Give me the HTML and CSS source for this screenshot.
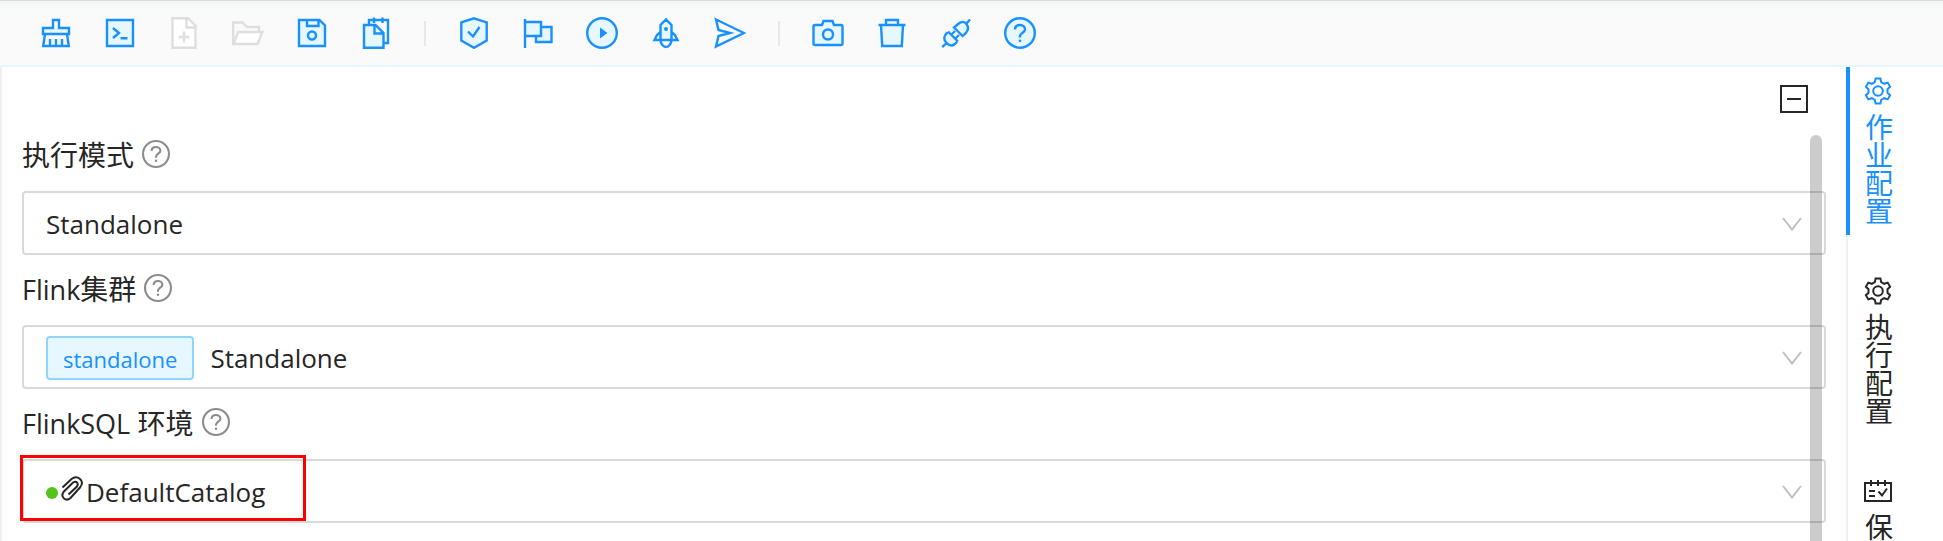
FILE: index.html
```html
<!DOCTYPE html>
<html lang="zh-CN">
<head>
<meta charset="utf-8">
<title>作业配置</title>
<link rel="stylesheet" href="styles.css">
</head>
<body>
<svg class="defs" aria-hidden="true">
  <symbol id="question" viewBox="0 0 32 32">
    <circle cx="16" cy="16" r="14.8"/>
    <path d="M11 12.6C11 9.6 13.2 8 16 8S21 9.8 21 12.4C21 15.6 16 15.8 16 19.2V20.4"/>
    <circle class="dot" cx="16" cy="23.8" r="1.4"/>
  </symbol>
  <symbol id="chevron" viewBox="0 0 20 14">
    <path d="M1 1L10 12.5L19 1"/>
  </symbol>
  <symbol id="gear" viewBox="0 0 28 28">
    <path d="M11.6 1.5h4.8l.8 3.6 3 1.7 3.5-1.2 2.4 4.2-2.6 2.5v3.4l2.6 2.5-2.4 4.2-3.5-1.2-3 1.7-.8 3.6h-4.8l-.8-3.6-3-1.7-3.5 1.2-2.4-4.2 2.6-2.5v-3.4L1.9 9.8l2.4-4.2 3.5 1.2 3-1.7z"/>
    <circle cx="14" cy="14" r="4.8"/>
  </symbol>
</svg>

<div class="toolbar" role="toolbar" aria-label="工具栏">
  <button class="tool" type="button" aria-label="清理"><svg viewBox="0 0 32 32"><path class="tint" d="M3 11h26v6H3z"/><path d="M13 11V3h6v8h10v6H3v-6zM5 17L3.2 29h25.6L27 17M10 29v-7M16 29v-7M22 29v-7"/></svg></button>
  <button class="tool" type="button" aria-label="控制台"><svg viewBox="0 0 32 32"><path class="tint" d="M3 3h26v26H3z"/><path d="M3 3h26v26H3zM9 11l6 5-6 5M16.5 21.2h7"/></svg></button>
  <button class="tool" type="button" aria-label="新建" disabled><svg viewBox="0 0 32 32"><path class="paper" d="M4 1h16l8 8v22H4z"/><path d="M4.500 1.200h15.500l7.500 7.500v22.100H4.500zM18.500 1v9.500H28M16 14.500v11M10.500 20h11"/></svg></button>
  <button class="tool" type="button" aria-label="打开" disabled><svg viewBox="0 0 32 32"><path class="paper" d="M6 15h24l-4.5 12H1.5z"/><path d="M27 15v-5H15l-4.500-4.500H1.200V27h24.300L30.500 15H6L1.500 27"/></svg></button>
  <button class="tool" type="button" aria-label="保存"><svg viewBox="0 0 32 32"><path class="tint" d="M3 3h20.5l5.5 5.5V29H3z"/><path d="M3 3h20.5l5.5 5.5V29H3zM11 3v6h11.5V3"/><circle cx="16" cy="18.5" r="4"/></svg></button>
  <button class="tool" type="button" aria-label="复制"><svg viewBox="0 0 32 32"><path class="tint" d="M4 8h13.5l6 6.5V31H4z"/><path d="M4 8h11.5l8 8v14.800H4zM14.500 8v8.500h9M9 7V3h19v23h-4M14 .5v5.500M22.500 .5v5.500"/></svg></button>
  <span class="divider"></span>
  <button class="tool" type="button" aria-label="校验"><svg viewBox="0 0 32 32"><path class="tint" d="M16 1l13 4v18.5L16 31 3 23.500V5z"/><path d="M16 1.300l12.700 4V23.500L16 30.800 3.300 23.500V5.300zM10 14.500l5 5L21.500 10"/></svg></button>
  <button class="tool" type="button" aria-label="计划"><svg viewBox="0 0 32 32"><path class="tint" d="M19 10h11v15H14v-6h5zM3 5h16v14H3z"/><path d="M3 2v29M3 5h16v14H3M19 10h10.500v15H14v-6"/></svg></button>
  <button class="tool" type="button" aria-label="运行"><svg viewBox="0 0 32 32"><circle class="tint" cx="16" cy="16" r="15"/><circle cx="16" cy="16" r="14.8"/><path class="solid" d="M14 10.500v11l7.500-5.500z"/></svg></button>
  <button class="tool" type="button" aria-label="发布"><svg viewBox="0 0 32 32"><path class="tint" d="M10.500 23V8L16 2.500 21.500 8v15z"/><path d="M10.500 23V8L16 2.500 21.500 8v15zM10.500 15L7 18l-2.500 5h6M21.500 15l3.500 3 2.500 5h-6M10.500 23c0 4 3 7 5.500 7s5.500-3 5.500-7"/><circle class="solid" cx="16" cy="12" r="2"/></svg></button>
  <button class="tool" type="button" aria-label="提交"><svg viewBox="0 0 32 32"><path d="M2 2.500L30 16 2 29.500 4.500 19 16 16 4.500 13z"/></svg></button>
  <span class="divider"></span>
  <button class="tool" type="button" aria-label="快照"><svg viewBox="0 0 32 32"><path class="tint" d="M2 8h7l2-4h10l2 4h7v20H2z"/><path d="M10 8l1.500-4h9L22 8h7q1.500 0 1.500 1.500V26.500q0 1.500-1.500 1.500H3q-1.500 0-1.500-1.500V9.500Q1.500 8 3 8z"/><circle cx="16" cy="17.500" r="5"/></svg></button>
  <button class="tool" type="button" aria-label="删除"><svg viewBox="0 0 32 32"><path class="tint" d="M5 8h22l-1 21H6z"/><path d="M2.500 8h27M10 8V3h12v5M5 8l1.200 21h19.600L27 8"/></svg></button>
  <button class="tool" type="button" aria-label="连接"><svg viewBox="0 0 32 32"><path class="tint" d="M7.500 15.500L17.500 25.500Q12 31 7 26.500T7.500 15.500zM13.500 11L20 5.500Q25 4 27 8.500T22.500 19.500z"/><path d="M8 14.500L18 24.500M7.500 15.500Q1.500 20.500 6.500 26T17 25M6.500 26L2.200 30.200M11.500 17.500l3.500-3.500M15.500 21.500l3.500-3.500M14 10.500L22.500 19l3-2.500Q30 11.500 26.500 7T17.500 7.500zM26.500 6.500L30 2.500"/></svg></button>
  <button class="tool" type="button" aria-label="帮助"><svg viewBox="0 0 32 32"><circle class="tint" cx="16" cy="16" r="15"/><use href="#question"/></svg></button>
</div>

<div class="workspace">
  <main class="panel">
    <div class="panel-head">
      <button class="collapse" type="button" aria-label="收起"><svg viewBox="0 0 28 28"><path d="M1 1h26v26H1zM7 14h14"/></svg></button>
    </div>
    <form class="form">
      <div class="field">
        <div class="label"><label for="mode">执行模式</label><svg class="hint"><use href="#question"/></svg></div>
        <div class="control">
          <select id="mode"><option>Standalone</option></select>
          <svg class="arrow"><use href="#chevron"/></svg>
        </div>
      </div>
      <div class="field">
        <div class="label"><label for="cluster"><span class="latin">Flink</span>集群</label><svg class="hint"><use href="#question"/></svg></div>
        <div class="control">
          <span class="tag">standalone</span>
          <select id="cluster"><option>Standalone</option></select>
          <svg class="arrow"><use href="#chevron"/></svg>
        </div>
      </div>
      <div class="field">
        <div class="label"><label for="env"><span class="latin">FlinkSQL</span> 环境</label><svg class="hint"><use href="#question"/></svg></div>
        <div class="control">
          <span class="status"></span>
          <svg class="clip" viewBox="0 0 24 26"><path d="M2.500 11.500L11.500 3q4.500-3.500 8.500 0t0 8.500L10.500 22q-3.500 3-6.500.500t-.500-6.500L13 6.500q2.500-1.500 4 0t0 4L8.500 18.500"/></svg>
          <select id="env"><option>DefaultCatalog</option></select>
          <svg class="arrow"><use href="#chevron"/></svg>
          <span class="highlight"></span>
        </div>
      </div>
    </form>
    <div class="scrollbar"></div>
  </main>

  <div class="tabs" role="tablist" aria-orientation="vertical">
    <button class="tab active" type="button" role="tab" aria-selected="true"><svg><use href="#gear"/></svg><span>作业配置</span></button>
    <button class="tab" type="button" role="tab" aria-selected="false"><svg><use href="#gear"/></svg><span>执行配置</span></button>
    <button class="tab" type="button" role="tab" aria-selected="false"><svg viewBox="0 0 28 28"><path d="M1 6h26v18H1zM7 3v6M14 3v6M21 3v6M5 14h6M5 19h6M14.500 14.500l3.500 4 5-7"/></svg><span>保存点</span></button>
  </div>
</div>
</body>
</html>
```
FILE: styles.css
```css
* {
  box-sizing: border-box;
}

body {
  margin: 0;
  height: 100vh;
  overflow: hidden;
  display: flex;
  flex-direction: column;
  background: #fff;
  color: #262626;
  font-family: "Open Sans", "Noto Sans CJK SC", sans-serif;
  font-size: 28px;
}

button,
select {
  margin: 0;
  padding: 0;
  border: 0;
  background: none;
  color: inherit;
  font: inherit;
}

svg {
  display: block;
  flex: none;
  fill: none;
  stroke: currentColor;
  stroke-width: 2;
}

.defs {
  position: absolute;
  width: 0;
  height: 0;
}

.dot,
.solid {
  fill: currentColor;
  stroke: none;
}

.tint {
  fill: #e6f7ff;
  stroke: none;
}

.paper {
  fill: #fff;
  stroke: none;
}

.toolbar {
  flex: none;
  display: flex;
  align-items: center;
  height: 67px;
  padding-left: 24px;
  border-top: 1px solid #d9dcdc;
  border-bottom: 2px solid #e6f7ff;
  background: linear-gradient(#f3f5f5, #fafafa 8px);
}

.tool {
  display: flex;
  justify-content: center;
  width: 64px;
  color: #1890ff;
}

.tool:disabled {
  color: #dedede;
}

.tool svg {
  width: 32px;
  height: 32px;
  stroke-width: 2.4;
}

.divider {
  width: 2px;
  height: 25px;
  margin: 0 16px;
  background: #e8e8e8;
}

.workspace {
  flex: 1;
  min-height: 0;
  display: flex;
}

.panel {
  position: relative;
  flex: 1;
  min-width: 0;
  overflow: hidden;
  border-left: 2px solid #f0f0f0;
}

.panel-head {
  display: flex;
  justify-content: flex-end;
  height: 54px;
  padding: 18px 38px 0 0;
}

.collapse {
  width: 28px;
  height: 28px;
}

.form {
  padding: 0 20px;
}

.label {
  display: flex;
  align-items: center;
  gap: 8px;
  height: 66px;
  margin-bottom: 4px;
}

.latin {
  font-size: 27px;
}

.hint {
  width: 28px;
  height: 28px;
  color: #8c8c8c;
  stroke-width: 2.4;
}

.control {
  position: relative;
  display: flex;
  align-items: center;
  height: 64px;
  padding: 2px 22px 0;
  border: 2px solid #d9d9d9;
  border-radius: 4px;
}

.control select {
  flex: 1;
  min-width: 0;
  height: 56px;
  appearance: none;
  font-size: 26px;
}

.arrow {
  width: 20px;
  height: 14px;
  color: #bfbfbf;
}

.tag {
  height: 44px;
  margin-right: 16px;
  padding: 0 15px;
  border: 2px solid #91d5ff;
  border-radius: 4px;
  background: #e6f7ff;
  color: #1890ff;
  font-size: 22px;
  line-height: 42px;
}

.status {
  width: 12px;
  height: 12px;
  margin-top: 2px;
  border-radius: 50%;
  background: #52c41a;
}

.clip {
  width: 24px;
  height: 26px;
  margin: 0 2px 6px;
}

.highlight {
  position: absolute;
  top: -6px;
  left: -4px;
  width: 286px;
  height: 66px;
  border: 3px solid #f00;
  pointer-events: none;
}

.scrollbar {
  position: absolute;
  top: 68px;
  right: 24px;
  bottom: -12px;
  width: 12px;
  border-radius: 6px;
  background: rgba(0, 0, 0, 0.2);
}

.tabs {
  flex: none;
  display: flex;
  flex-direction: column;
  gap: 32px;
  width: 97px;
  overflow: hidden;
  box-shadow: inset 2px 0 #f0f0f0;
}

.tab {
  flex: none;
  display: flex;
  flex-direction: column;
  align-items: flex-start;
  gap: 8px;
  padding: 10px 0 10px 14px;
  border-left: 4px solid transparent;
}

.tab.active {
  border-color: #1890ff;
  color: #1890ff;
}

.tab svg {
  width: 28px;
  height: 28px;
}

.tab span {
  writing-mode: vertical-rl;
  line-height: 28px;
}
```
